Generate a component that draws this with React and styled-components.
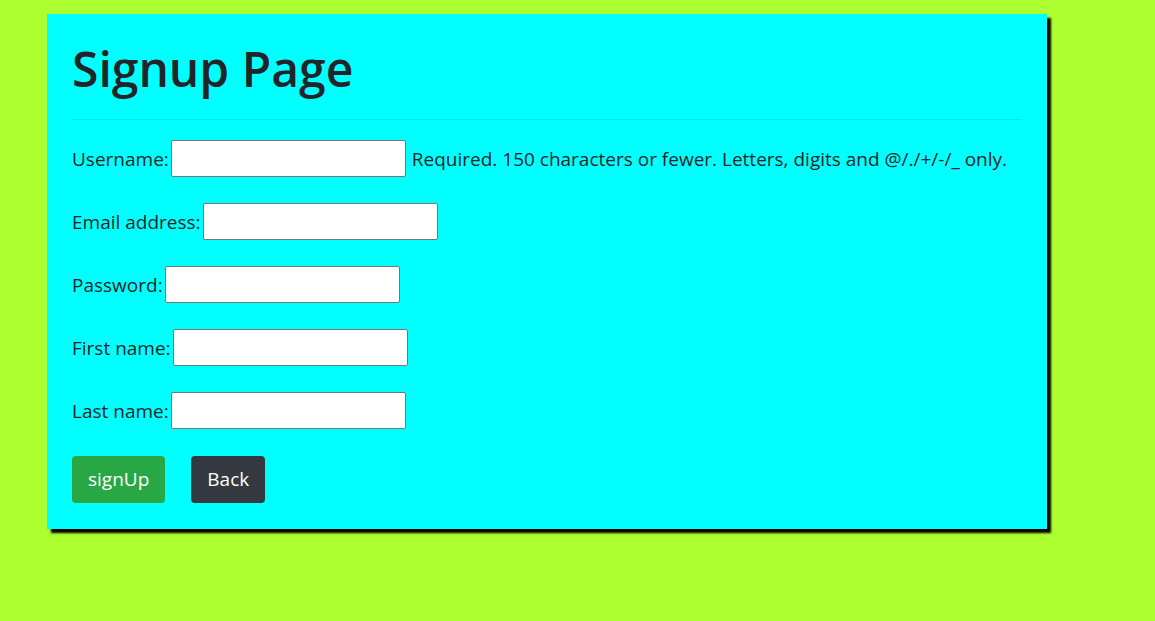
import React from 'react'
import styled, { createGlobalStyle } from 'styled-components'

const GlobalStyle = createGlobalStyle`
  body {
    margin: 0;
    background: #adff2f;
    font-family: "Open Sans", "Noto Sans", sans-serif;
    color: #212529;
  }
`

const Page = styled.div`
  padding: 14px 0 0 47px;
  min-height: 621px;
  box-sizing: border-box;
`

const Card = styled.div`
  width: 1000px;
  box-sizing: border-box;
  background: #00ffff;
  padding: 26px 25px 26px;
  box-shadow: 4px 4px 2px #000;
`

const Title = styled.h1`
  margin: 0;
  font-size: 48px;
  font-weight: 600;
  line-height: 1.2;
`

const Divider = styled.hr`
  margin: 21px 0 21px;
  border: 0;
  border-top: 1px solid rgba(0, 0, 0, 0.1);
`

const Row = styled.p`
  margin: 0 0 27px;
  display: flex;
  align-items: center;
  font-size: 19px;
  height: 36px;
`

const Input = styled.input`
  width: 235px;
  height: 37px;
  box-sizing: border-box;
  margin: 0 6px 0 2px;
  border: 1px solid #767676;
  border-radius: 2px;
  background: #fff;
`

const Buttons = styled.div`
  display: flex;
  gap: 26px;
`

const Button = styled.button`
  height: 47px;
  padding: 0 16px;
  border: 0;
  border-radius: 4px;
  font-family: inherit;
  font-size: 19px;
  color: #fff;
  background: ${(p) => p.bg};
`

const fields = [
  { label: 'Username:', type: 'text', help: 'Required. 150 characters or fewer. Letters, digits and @/./+/-/_ only.' },
  { label: 'Email address:', type: 'email' },
  { label: 'Password:', type: 'password' },
  { label: 'First name:', type: 'text' },
  { label: 'Last name:', type: 'text' },
]

const App = () => {
  return (
    <>
      <GlobalStyle />
      <Page>
        <Card>
          <Title>Signup Page</Title>
          <Divider />
          {fields.map((f) => (
            <Row key={f.label}>
              {f.label}
              <Input type={f.type} />
              {f.help}
            </Row>
          ))}
          <Buttons>
            <Button bg="#28a745">signUp</Button>
            <Button bg="#343a40">Back</Button>
          </Buttons>
        </Card>
      </Page>
    </>
  )
}

export default App
